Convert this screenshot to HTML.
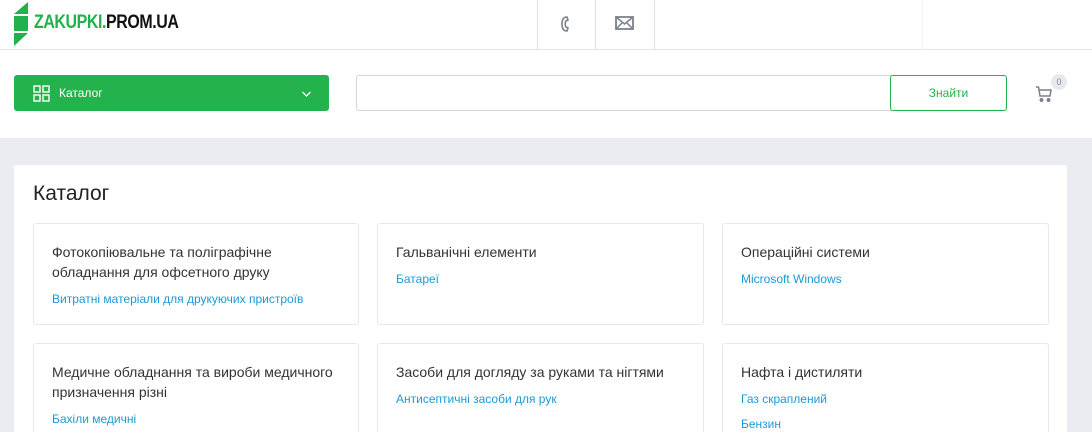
<!DOCTYPE html>
<html><head><meta charset="utf-8"><style>
*{margin:0;padding:0;box-sizing:border-box}
html,body{width:1092px;height:432px;overflow:hidden}
body{background:#fff;font-family:"Liberation Sans",Arial,sans-serif;position:relative}
.a{position:absolute}
.hdr{left:0;top:0;width:1092px;height:50px;border-bottom:1px solid #e3e5e8}
.vl{top:0;width:1px;height:49px;background:#dcdfe4}
.gray{left:0;top:138px;width:1092px;height:294px;background:#e9ecf0}
.panel{left:14px;top:165px;width:1053px;height:280px;background:#fff;border-radius:3px}
.card{background:#fff;border:1px solid #e6e8eb;border-radius:3px;padding:0 18px}
.t{font-size:14px;line-height:20px;color:#333;margin-top:18px}
.l{font-size:12px;color:#1a9bd7;line-height:16px;margin-top:9px}
.l2{margin-top:9px}
</style></head><body>
<div class="a hdr"></div>
<svg class="a" style="left:14px;top:2px" width="20" height="44" viewBox="0 0 20 44">
<polygon points="0,12 14,0 14,12" fill="#22b14c"/>
<rect x="0" y="14" width="14" height="15" fill="#22b14c"/>
<polygon points="0,31 14,31 0,44" fill="#22b14c"/>
</svg>
<div class="a" style="left:34px;top:12px;font-size:19px;font-weight:bold;letter-spacing:-0.5px;line-height:22px;transform:scaleX(0.84);transform-origin:0 0;white-space:nowrap"><span style="color:#22b14c">ZAKUPKI.</span><span style="color:#111">PROM.UA</span></div>
<div class="a vl" style="left:537px"></div>
<div class="a vl" style="left:595px"></div>
<div class="a vl" style="left:654px"></div>
<div class="a vl" style="left:922px;background:#f3f4f6"></div>
<svg class="a" style="left:558px;top:14px" width="14" height="20" viewBox="0 0 14 20"><path d="M9 3 C5 3 4 6 4 10 C4 14 5 17 9 17 L10 14 L8 13 C7 12 7 8 8 7 L10 6 Z" fill="none" stroke="#7a818b" stroke-width="1.6"/></svg>
<svg class="a" style="left:615px;top:15px" width="19" height="16" viewBox="0 0 19 16"><rect x="1" y="2" width="17" height="12" fill="none" stroke="#7a818b" stroke-width="1.8"/><path d="M1 2 L9.5 9 L18 2 M1 14 L7 8 M18 14 L12 8" fill="none" stroke="#7a818b" stroke-width="1.5"/></svg>
<div class="a" style="left:14px;top:75px;width:315px;height:36px;background:#24b24c;border-radius:3px"></div>
<svg class="a" style="left:33px;top:85px" width="17" height="17" viewBox="0 0 17 17" fill="none" stroke="#fff" stroke-width="1.4"><rect x="1" y="1" width="6" height="6"/><rect x="10" y="1" width="6" height="6"/><rect x="1" y="10" width="6" height="6"/><rect x="10" y="10" width="6" height="6"/></svg>
<div class="a" style="left:59px;top:86px;color:#fff;font-size:12px">Каталог</div>
<svg class="a" style="left:301px;top:90px" width="11" height="8" viewBox="0 0 11 8"><path d="M1.5 2 L5.5 6 L9.5 2" fill="none" stroke="#fff" stroke-width="1.3"/></svg>
<div class="a" style="left:356px;top:75px;width:536px;height:36px;border:1px solid #d4d7dc;border-right:none;border-radius:3px 0 0 3px"></div>
<div class="a" style="left:890px;top:75px;width:117px;height:36px;border:1px solid #24b24c;border-radius:3px;color:#24b24c;font-size:12px;text-align:center;line-height:34px">Знайти</div>
<svg class="a" style="left:1035px;top:85px" width="20" height="18" viewBox="0 0 20 18" fill="none" stroke="#7a818b" stroke-width="1.5"><path d="M1 2 H3.5 L5 11 H15 L16 5 H4.5"/><circle cx="6.5" cy="15" r="1.2" fill="#7a818b"/><circle cx="13.5" cy="15" r="1.2" fill="#7a818b"/></svg>
<div class="a" style="left:1051px;top:74px;width:16px;height:16px;border-radius:50%;background:#e6e9ed;color:#888;font-size:9px;text-align:center;line-height:16px">0</div>
<div class="a gray"></div>
<div class="a panel"></div>
<div class="a" style="left:33px;top:182px;font-size:21px;color:#222">Каталог</div>

<div class="a card" style="left:33px;top:223px;width:326px;height:102px"><div class="t">Фотокопіювальне та поліграфічне обладнання для офсетного друку</div><div class="l">Витратні матеріали для друкуючих пристроїв</div></div>
<div class="a card" style="left:377px;top:223px;width:327px;height:102px"><div class="t">Гальванічні елементи</div><div class="l">Батареї</div></div>
<div class="a card" style="left:722px;top:223px;width:327px;height:102px"><div class="t">Операційні системи</div><div class="l">Microsoft Windows</div></div>

<div class="a card" style="left:33px;top:343px;width:326px;height:110px"><div class="t">Медичне обладнання та вироби медичного призначення різні</div><div class="l">Бахіли медичні</div></div>
<div class="a card" style="left:377px;top:343px;width:327px;height:110px"><div class="t">Засоби для догляду за руками та нігтями</div><div class="l">Антисептичні засоби для рук</div></div>
<div class="a card" style="left:722px;top:343px;width:327px;height:110px"><div class="t">Нафта і дистиляти</div><div class="l">Газ скраплений</div><div class="l l2">Бензин</div></div>
</body></html>
